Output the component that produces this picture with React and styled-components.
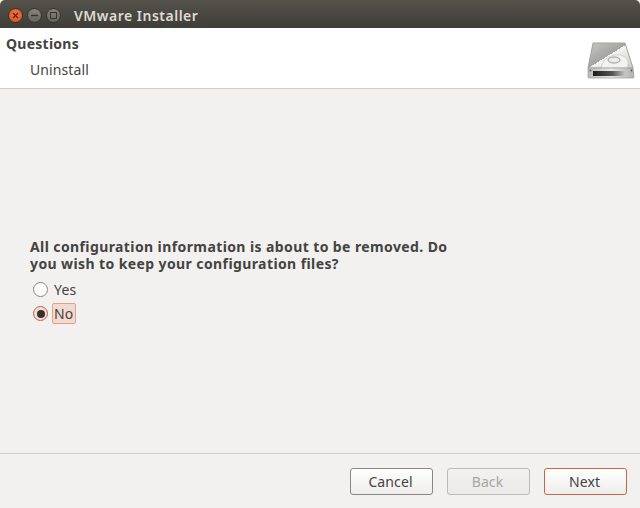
import React from 'react';
import styled, { createGlobalStyle } from 'styled-components';

const GlobalStyle = createGlobalStyle`
  html, body {
    margin: 0;
    padding: 0;
    background: #f2f1f0;
  }
  * {
    box-sizing: border-box;
  }
`;

const Window = styled.div`
  display: flex;
  flex-direction: column;
  width: 640px;
  height: 508px;
  overflow: hidden;
  background: #f2f1f0;
  color: #444340;
  font-family: "Noto Sans", "Open Sans", sans-serif;
  font-size: 14px;
`;

const TitleBar = styled.div`
  display: flex;
  align-items: center;
  flex: 0 0 28px;
  padding: 2px 0 0 8px;
  background: linear-gradient(#54524b, #3e3d38);
  border-radius: 5px 5px 0 0;
`;

const Controls = styled.div`
  display: flex;
  gap: 4px;
  margin-right: 13px;
`;

const WinButton = styled.div`
  display: flex;
  align-items: center;
  justify-content: center;
  width: 15px;
  height: 15px;
  border-radius: 50%;
  background: ${({ $close }) =>
    $close
      ? 'radial-gradient(circle at 50% 40%, #f47a4a, #dd4814)'
      : 'linear-gradient(#85847c, #65645e)'};
  border: 1px solid #35342f;
`;

const Title = styled.div`
  color: #dfdbd2;
  font-size: 14px;
  font-weight: 600;
  letter-spacing: 0.5px;
`;

const Header = styled.div`
  display: flex;
  justify-content: space-between;
  flex: 0 0 61px;
  padding: 7px 5px 0 6px;
  background: #fff;
  border-bottom: 1px solid #cfcdca;
`;

const HeaderText = styled.div`
  display: flex;
  flex-direction: column;
`;

const HeaderTitle = styled.div`
  font-size: 14px;
  line-height: 17px;
  font-weight: 700;
  letter-spacing: 0.25px;
`;

const HeaderSub = styled.div`
  margin: 9px 0 0 24px;
  font-size: 14px;
  line-height: 17px;
  letter-spacing: 0.1px;
`;

const HeaderIcon = styled.svg`
  width: 48px;
  height: 37px;
  margin-top: 7px;
`;

const Body = styled.div`
  display: flex;
  flex-direction: column;
  justify-content: center;
  flex: 1;
  padding: 20px 30px 0;
`;

const Question = styled.div`
  width: 430px;
  font-size: 14px;
  line-height: 17px;
  font-weight: 700;
  letter-spacing: 0.4px;
`;

const Options = styled.div`
  display: flex;
  flex-direction: column;
  gap: 3px;
  margin-top: 7px;
`;

const Option = styled.div`
  display: flex;
  align-items: center;
  gap: 4px;
  height: 21px;
  margin-left: 3px;
`;

const Radio = styled.span`
  display: flex;
  align-items: center;
  justify-content: center;
  width: 15px;
  height: 15px;
  border-radius: 50%;
  background: ${({ $checked }) => ($checked ? '#f3ddd4' : '#fff')};
  border: ${({ $checked }) => ($checked ? '1.5px solid #c8623f' : '1px solid #86847f')};
`;

const RadioDot = styled.span`
  width: 8px;
  height: 8px;
  border-radius: 50%;
  background: #33322f;
`;

const OptionLabel = styled.span`
  padding: 0 1px;
  line-height: 19px;
  letter-spacing: 0.2px;
  border: 1px solid ${({ $focus }) => ($focus ? '#dca48e' : 'transparent')};
  border-radius: 2px;
  background: ${({ $focus }) => ($focus ? '#f3d9cf' : 'transparent')};
`;

const Footer = styled.div`
  display: flex;
  justify-content: flex-end;
  gap: 14px;
  flex: 0 0 55px;
  padding: 14px 13px 0 0;
  border-top: 1px solid #cfcdca;
`;

const Button = styled.div`
  display: flex;
  align-items: center;
  justify-content: center;
  width: 83px;
  height: 27px;
  padding-right: 2px;
  letter-spacing: 0.1px;
  border-radius: 3px;
  border: 1px solid ${({ $default, $disabled }) =>
    $default ? '#c9673f' : $disabled ? '#bdbbb7' : '#8a8883'};
  background: ${({ $disabled }) =>
    $disabled ? 'linear-gradient(#f2f1f0, #ebeae8)' : 'linear-gradient(#fff, #eeedeb)'};
  color: ${({ $disabled }) => ($disabled ? '#a9a7a3' : '#444340')};
`;

const DiskIcon = () => (
  <HeaderIcon viewBox="0 0 48 37">
    <defs>
      <linearGradient id="plate" x1="0" y1="0" x2="1" y2="0.9">
        <stop offset="0" stopColor="#c6c6c4" />
        <stop offset="0.5" stopColor="#a4a4a2" />
        <stop offset="0.5" stopColor="#f4f4f2" />
        <stop offset="1" stopColor="#cfcfcd" />
      </linearGradient>
      <linearGradient id="slot" x1="0" y1="0" x2="1" y2="0">
        <stop offset="0" stopColor="#1c1c1c" />
        <stop offset="0.6" stopColor="#555" />
        <stop offset="1" stopColor="#c4c4c2" />
      </linearGradient>
      <linearGradient id="base" x1="0" y1="0" x2="1" y2="0">
        <stop offset="0" stopColor="#b8b8b6" />
        <stop offset="0.5" stopColor="#e8e8e6" />
        <stop offset="1" stopColor="#b0b0ae" />
      </linearGradient>
    </defs>
    <path d="M6 1 L38 1 L46 26 L1 26 Z" fill="url(#plate)" stroke="#a2a2a0" />
    <path d="M14 26 C15 17 24 12 33 13 C40 14 43 20 40 26 Z" fill="#f2f2f0" stroke="#c4c4c2" strokeWidth="0.7" />
    <ellipse cx="27" cy="18" rx="6" ry="3" fill="#ececea" stroke="#8e8e8c" strokeWidth="0.9" />
    <path d="M1 26 H46 L47 35 Q47 36 46 36 H2 Q1 36 1 35 Z" fill="url(#base)" stroke="#9a9a98" strokeWidth="0.7" />
    <rect x="6" y="29" width="32" height="5" fill="url(#slot)" />
    <circle cx="3.5" cy="28.5" r="0.9" fill="#555" />
    <circle cx="44.5" cy="28.5" r="0.9" fill="#555" />
  </HeaderIcon>
);

export default function App() {
  return (
    <>
      <GlobalStyle />
      <Window>
        <TitleBar>
          <Controls>
            <WinButton $close>
              <svg width="7" height="7" viewBox="0 0 7 7">
                <path d="M1 1 L6 6 M6 1 L1 6" stroke="#4a2415" strokeWidth="1.2" />
              </svg>
            </WinButton>
            <WinButton>
              <svg width="7" height="7" viewBox="0 0 7 7">
                <path d="M0 3.5 H7" stroke="#35342f" strokeWidth="1.4" />
              </svg>
            </WinButton>
            <WinButton>
              <svg width="7" height="7" viewBox="0 0 7 7">
                <rect x="0.5" y="0.5" width="6" height="6" fill="none" stroke="#35342f" />
              </svg>
            </WinButton>
          </Controls>
          <Title>VMware Installer</Title>
        </TitleBar>
        <Header>
          <HeaderText>
            <HeaderTitle>Questions</HeaderTitle>
            <HeaderSub>Uninstall</HeaderSub>
          </HeaderText>
          <DiskIcon />
        </Header>
        <Body>
          <Question>
            All configuration information is about to be removed. Do you wish to keep your
            configuration files?
          </Question>
          <Options>
            <Option>
              <Radio />
              <OptionLabel>Yes</OptionLabel>
            </Option>
            <Option>
              <Radio $checked>
                <RadioDot />
              </Radio>
              <OptionLabel $focus>No</OptionLabel>
            </Option>
          </Options>
        </Body>
        <Footer>
          <Button>Cancel</Button>
          <Button $disabled>Back</Button>
          <Button $default>Next</Button>
        </Footer>
      </Window>
    </>
  );
}
